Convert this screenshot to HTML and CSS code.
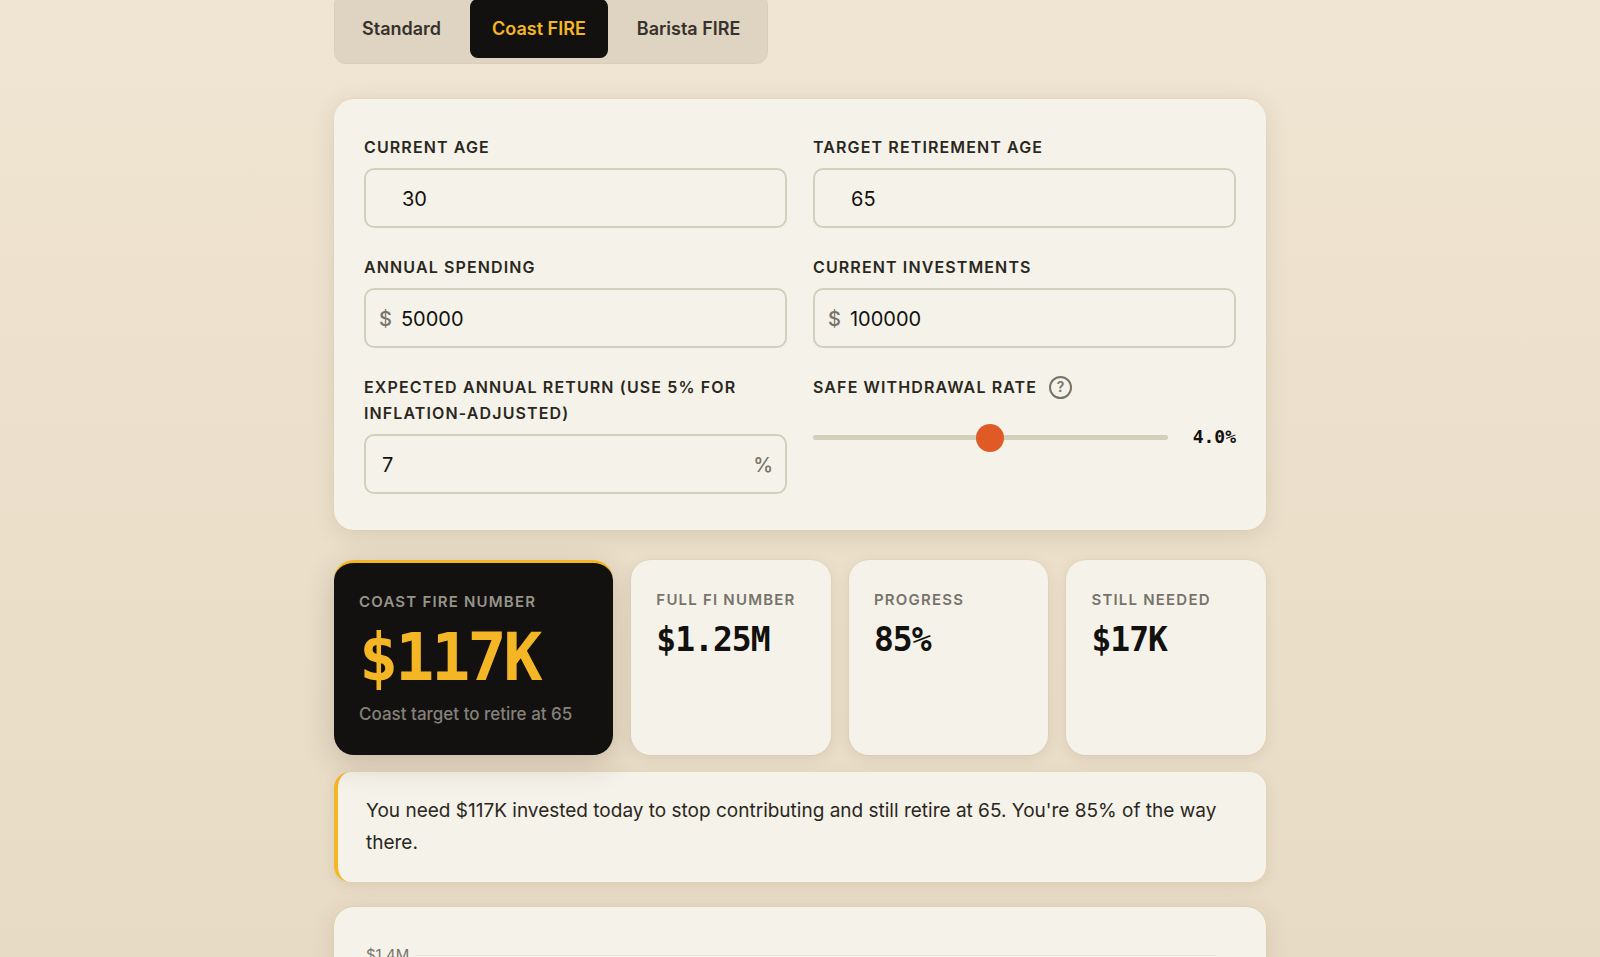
FILE: index.html
```html
<!DOCTYPE html>
<html lang="en">
<head>
<meta charset="utf-8">
<meta name="viewport" content="width=device-width, initial-scale=1">
<title>Coast FIRE Calculator</title>
<link rel="stylesheet" href="styles.css">
</head>
<body>
<main class="page">
  <nav class="tabs" aria-label="Calculator mode">
    <button class="tab" type="button">Standard</button>
    <button class="tab tab-active" type="button">Coast FIRE</button>
    <button class="tab" type="button">Barista FIRE</button>
  </nav>

  <form class="card form-grid">
    <div class="field">
      <label class="label" for="age">Current Age</label>
      <div class="control control-indent"><input class="input" id="age" type="text" inputmode="numeric" value="30"></div>
    </div>
    <div class="field">
      <label class="label" for="target">Target Retirement Age</label>
      <div class="control control-indent"><input class="input" id="target" type="text" inputmode="numeric" value="65"></div>
    </div>
    <div class="field">
      <label class="label" for="spending">Annual Spending</label>
      <div class="control"><span class="affix">$</span><input class="input" id="spending" type="text" inputmode="numeric" value="50000"></div>
    </div>
    <div class="field">
      <label class="label" for="investments">Current Investments</label>
      <div class="control"><span class="affix">$</span><input class="input" id="investments" type="text" inputmode="numeric" value="100000"></div>
    </div>
    <div class="field">
      <label class="label" for="return">Expected Annual Return (use 5% for inflation-adjusted)</label>
      <div class="control control-suffix"><input class="input" id="return" type="text" inputmode="numeric" value="7"><span class="affix">%</span></div>
    </div>
    <div class="field">
      <div class="label-row">
        <label class="label" for="rate">Safe Withdrawal Rate</label>
        <button class="help" type="button" aria-label="About the withdrawal rate">?</button>
      </div>
      <div class="slider-row">
        <input class="slider" id="rate" type="range" min="3" max="5" step="0.1" value="4">
        <output class="slider-value" for="rate">4.0%</output>
      </div>
    </div>
  </form>

  <section class="stats" aria-label="Results">
    <div class="stat stat-hero">
      <div class="stat-label">Coast FIRE Number</div>
      <div class="stat-value">$117K</div>
      <div class="stat-note">Coast target to retire at 65</div>
    </div>
    <div class="stat">
      <div class="stat-label">Full FI Number</div>
      <div class="stat-value">$1.25M</div>
    </div>
    <div class="stat">
      <div class="stat-label">Progress</div>
      <div class="stat-value">85%</div>
    </div>
    <div class="stat">
      <div class="stat-label">Still Needed</div>
      <div class="stat-value">$17K</div>
    </div>
  </section>

  <p class="insight">You need $117K invested today to stop contributing and still retire at 65. You're 85% of the way there.</p>

  <section class="card chart" aria-label="Projection">
    <div class="axis-row"><span class="tick">$1.4M</span><span class="gridline"></span></div>
  </section>
</main>
</body>
</html>
```
FILE: styles.css
```css
* { box-sizing: border-box; }

body {
  margin: 0;
  height: 100vh;
  overflow: hidden;
  background: linear-gradient(180deg, #f0e5d2 0%, #e8dbc5 100%);
  color: #12110f;
  font-family: Inter, "Liberation Sans", sans-serif;
}

.page {
  width: 100%;
  max-width: 932px;
  margin: -7px auto 0;
}

.tabs {
  display: inline-flex;
  gap: 7px;
  padding: 5px;
  border: 1px solid #d9cebc;
  border-radius: 12px;
  background: #dfd4c2;
}

.tab {
  padding: 0 22px;
  border: 0;
  border-radius: 8px;
  background: transparent;
  color: #36322b;
  font: 600 18px/59px Inter, sans-serif;
}

.tab-active {
  background: #12110f;
  color: #f5b625;
}

.card {
  border-radius: 20px;
  background: #f5f2e9;
  box-shadow: 0 0 0 1px rgba(60, 45, 20, 0.02), 0 5px 24px rgba(80, 55, 20, 0.12);
}

.form-grid {
  display: grid;
  grid-template-columns: 1fr 1fr;
  gap: 26px;
  margin-top: 35px;
  padding: 35px 30px 36px;
}

.field {
  display: flex;
  flex-direction: column;
  gap: 8px;
}

.label {
  color: #2a2721;
  font-size: 16px;
  font-weight: 600;
  line-height: 26px;
  letter-spacing: 0.07em;
  text-transform: uppercase;
}

.label-row {
  display: flex;
  align-items: center;
  gap: 12px;
}

.help {
  width: 23px;
  height: 23px;
  padding: 0;
  border: 2px solid #77736b;
  border-radius: 50%;
  background: transparent;
  color: #77736b;
  font: 600 14px/18px Inter, sans-serif;
}

.control {
  display: flex;
  align-items: center;
  gap: 9px;
  height: 60px;
  padding: 2px 12px 0 13px;
  border: 2px solid #d3cfbd;
  border-radius: 10px;
}

.control-indent { padding-left: 36px; }

.control-suffix { padding-left: 16px; }

.input {
  flex: 1;
  min-width: 0;
  padding: 0;
  border: 0;
  outline: 0;
  background: transparent;
  color: #12110f;
  font: 400 20px/28px Inter, sans-serif;
}

.affix {
  color: #77736b;
  font-size: 20px;
  font-weight: 500;
  line-height: 28px;
}

.slider-row {
  display: flex;
  align-items: center;
  gap: 25px;
  padding-top: 15px;
}

.slider {
  flex: 1;
  min-width: 0;
  height: 28px;
  margin: 0;
  appearance: none;
  background: transparent;
}

.slider::-webkit-slider-runnable-track {
  height: 5px;
  border-radius: 3px;
  background: #d3cfbd;
}

.slider::-webkit-slider-thumb {
  width: 28px;
  height: 28px;
  margin-top: -11px;
  appearance: none;
  border-radius: 50%;
  background: #e05a26;
}

.slider-value {
  font: 700 18px/28px "DejaVu Sans Mono", monospace;
}

.stats {
  display: grid;
  grid-template-columns: 7fr 5fr 5fr 5fr;
  gap: 18px;
  margin-top: 30px;
}

.stat {
  padding: 27px 25px;
  border-radius: 20px;
  background: #f5f2e9;
  box-shadow: 0 0 0 1px rgba(60, 45, 20, 0.02), 0 3px 14px rgba(80, 55, 20, 0.1);
}

.stat-label {
  color: #77736b;
  font-size: 15px;
  font-weight: 600;
  line-height: 26px;
  letter-spacing: 0.08em;
  text-transform: uppercase;
  white-space: nowrap;
}

.stat-value {
  margin-top: 7px;
  font: 700 33px/40px "DejaVu Sans Mono", monospace;
  letter-spacing: -1px;
}

.stat-hero {
  padding-top: 26px;
  border-top: 3px solid #f5b625;
  background: #12110f;
  box-shadow: 0 8px 32px rgba(60, 40, 15, 0.2);
}

.stat-hero .stat-label {
  color: #98948a;
}

.stat-hero .stat-value {
  color: #f5b625;
  font-size: 65px;
  line-height: 72px;
  letter-spacing: -3px;
}

.stat-note {
  margin-top: 6px;
  color: #85817a;
  font-size: 17px;
  font-weight: 500;
  line-height: 28px;
}

.insight {
  margin: 17px 0 25px;
  padding: 23px 28px;
  border-left: 4px solid #f5b625;
  border-radius: 16px;
  background: #f5f2e9;
  box-shadow: 0 3px 14px rgba(80, 55, 20, 0.1);
  color: #2a2721;
  font-size: 19px;
  line-height: 32px;
}

.chart {
  min-height: 120px;
  padding: 36px 50px 36px 32px;
}

.axis-row {
  display: flex;
  align-items: center;
  gap: 6px;
}

.tick {
  color: #77736b;
  font-size: 15px;
  line-height: 24px;
}

.gridline {
  flex: 1;
  height: 1px;
  background: #e6e2d8;
}
```
